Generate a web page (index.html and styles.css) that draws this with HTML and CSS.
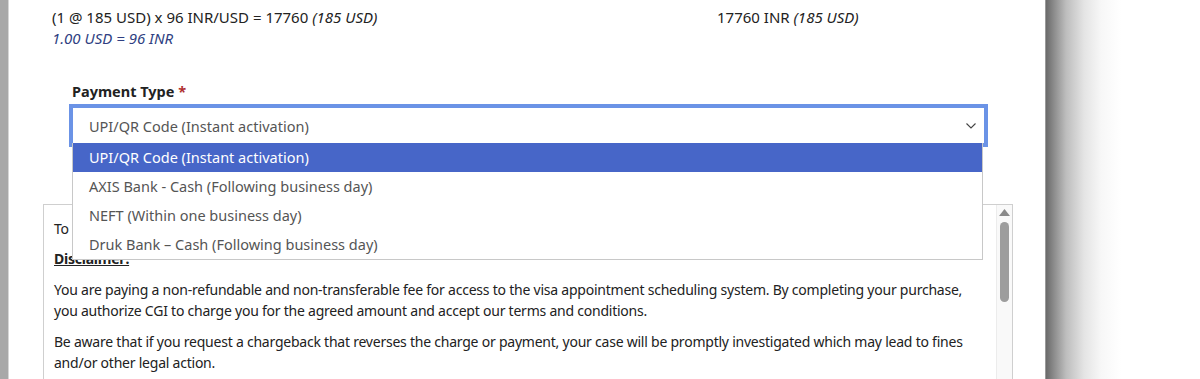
FILE: index.html
```html
<!DOCTYPE html>
<html>
<head>
<meta charset="utf-8">
<link rel="stylesheet" href="styles.css">
</head>
<body>
<div class="strip"></div>
<div class="panel">
  <div class="summary">
    <div class="calc">
      <div class="line">(1 @ 185 USD) x 96 INR/USD = 17760 <i>(185 USD)</i></div>
      <div class="rate">1.00 USD = 96 INR</div>
    </div>
    <div class="total">17760 INR <i>(185 USD)</i></div>
  </div>

  <div class="field">
    <label class="label">Payment Type <span class="req">*</span></label>
    <div class="select-wrap">
      <div class="select">
        <span>UPI/QR Code (Instant activation)</span>
        <svg class="chev" width="10" height="6" viewBox="0 0 10 6"><path d="M0.5 0.5 L5 5 L9.5 0.5" fill="none" stroke="#444" stroke-width="1.1"/></svg>
      </div>
      <ul class="menu">
        <li class="sel">UPI/QR Code (Instant activation)</li>
        <li>AXIS Bank - Cash (Following business day)</li>
        <li>NEFT (Within one business day)</li>
        <li>Druk Bank – Cash (Following business day)</li>
      </ul>
    </div>
  </div>

  <div class="terms">
    <div class="terms-body">
      <p class="to">To</p>
      <p class="disc"><b><u>Disclaimer:</u></b></p>
      <p>You are paying a non-refundable and non-transferable fee for access to the visa appointment scheduling system. By completing your purchase, you authorize CGI to charge you for the agreed amount and accept our terms and conditions.</p>
      <p>Be aware that if you request a chargeback that reverses the charge or payment, your case will be promptly investigated which may lead to fines and/or other legal action.</p>
    </div>
    <div class="scroll">
      <svg class="up" width="11" height="7" viewBox="0 0 11 7"><path d="M5.5 0 L11 7 L0 7 Z" fill="#8a8a8a"/></svg>
      <div class="thumb"></div>
    </div>
  </div>
</div>
<div class="shadow"></div>
</body>
</html>
```

FILE: styles.css
```css
html, body {
  margin: 0;
  padding: 0;
  height: 379px;
  overflow: hidden;
  background: #fff;
}
body {
  display: flex;
  font-family: "Noto Sans", "Open Sans", sans-serif;
  color: #222;
}
.strip {
  width: 8px;
  background: #a8a8a8;
  border-right: 1px solid #d6d6d6;
  flex: none;
}
.panel {
  width: 1036px;
  flex: none;
  background: #fff;
  border-right: 1px solid #9a9a9a;
  position: relative;
}
.shadow {
  flex: 1;
  background: linear-gradient(to right, #6a6a6a 0px, #8c8c8c 8px, #bdbdbd 20px, #e4e4e4 38px, #f7f7f7 55px, #fff 75px);
}
.summary {
  display: flex;
  padding: 7px 0 0 43px;
  font-size: 15px;
  line-height: 21px;
}
.calc {
  width: 665px;
}
.rate {
  color: #2f3f82;
  font-style: italic;
}
.field {
  padding: 32px 0 0 60px;
  width: 919px;
}
.label {
  display: block;
  font-weight: bold;
  font-size: 14.5px;
  line-height: 20px;
  padding-left: 3px;
  color: #222;
  margin-bottom: 3px;
}
.req {
  color: #b03030;
}
.select-wrap {
  position: relative;
  border: 4px solid #6b93e6;
}
.select {
  height: 35px;
  display: flex;
  align-items: center;
  justify-content: space-between;
  padding: 0 8px 0 16px;
  font-size: 14.5px;
  color: #555;
  background: #fff;
}
.chev {
  margin-top: 1px;
}
.menu {
  position: absolute;
  top: 35px;
  left: -1px;
  width: 909px;
  margin: 0;
  padding: 0;
  list-style: none;
  background: #fff;
  border: 1px solid #c8c8c8;
  border-top: none;
  z-index: 2;
  font-size: 14.5px;
  color: #555;
}
.menu li {
  height: 29px;
  line-height: 29px;
  padding-left: 16px;
}
.menu li.sel {
  background: #4766c8;
  color: #fff;
}
.terms {
  margin: 57px 0 0 34px;
  width: 968px;
  height: 200px;
  border: 1px solid #cfcfcf;
  display: flex;
}
.terms-body {
  flex: 1;
  padding: 13px 10px 0 10px;
  font-size: 14px;
  letter-spacing: -0.23px;
  line-height: 21px;
  color: #222;
}
.terms-body p {
  margin: 0 0 10px 0;
}
.terms-body p.to {
  margin-bottom: 9px;
}
.terms-body p.disc {
  margin-bottom: 10px;
}
.scroll {
  width: 15px;
  background: #f9f9f9;
  border-left: 1px solid #ececec;
  display: flex;
  flex-direction: column;
  align-items: center;
  padding-top: 4px;
}
.up {
  display: block;
}
.thumb {
  margin-top: 6px;
  width: 9px;
  height: 80px;
  border-radius: 5px;
  background: #9d9d9d;
}
```
